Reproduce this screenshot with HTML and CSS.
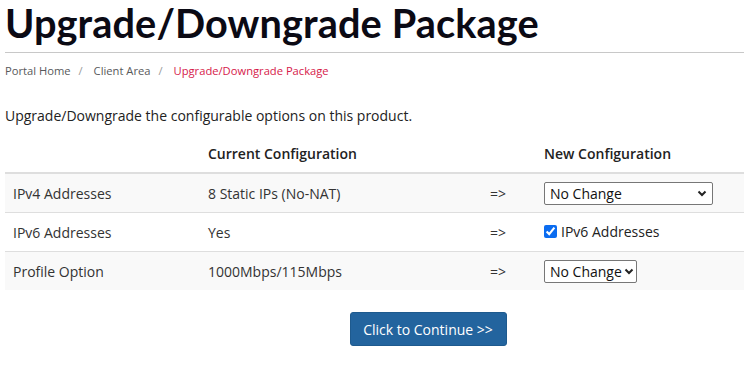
FILE: index.html
```html
<!DOCTYPE html>
<html>
<head>
<meta charset="utf-8">
<link rel="stylesheet" href="styles.css">
</head>
<body>
<div class="page">
  <h1 class="title">Upgrade/Downgrade Package</h1>
  <nav class="crumbs">
    <span class="crumb">Portal Home</span><span class="sep">/</span>
    <span class="crumb">Client Area</span><span class="sep">/</span>
    <span class="crumb active">Upgrade/Downgrade Package</span>
  </nav>
  <p class="intro">Upgrade/Downgrade the configurable options on this product.</p>
  <table class="config">
    <thead>
      <tr>
        <th class="c1"></th>
        <th class="c2">Current Configuration</th>
        <th class="c3"></th>
        <th class="c4">New Configuration</th>
      </tr>
    </thead>
    <tbody>
      <tr class="odd">
        <td>IPv4 Addresses</td>
        <td>8 Static IPs (No-NAT)</td>
        <td>=&gt;</td>
        <td>
          <span class="sel wide">
            <select><option>No Change</option></select>
            <svg class="chev" width="10" height="7" viewBox="0 0 10 7"><path d="M1.5 1.5 L5 5 L8.5 1.5" fill="none" stroke="#222" stroke-width="2"/></svg>
          </span>
        </td>
      </tr>
      <tr>
        <td>IPv6 Addresses</td>
        <td>Yes</td>
        <td>=&gt;</td>
        <td><label class="chk"><input type="checkbox" checked> IPv6 Addresses</label></td>
      </tr>
      <tr class="odd">
        <td>Profile Option</td>
        <td>1000Mbps/115Mbps</td>
        <td>=&gt;</td>
        <td>
          <span class="sel narrow">
            <select><option>No Change</option></select>
            <svg class="chev" width="10" height="7" viewBox="0 0 10 7"><path d="M1.5 1.5 L5 5 L8.5 1.5" fill="none" stroke="#222" stroke-width="2"/></svg>
          </span>
        </td>
      </tr>
    </tbody>
  </table>
  <div class="actions">
    <button class="btn">Click to Continue &gt;&gt;</button>
  </div>
</div>
</body>
</html>
```

FILE: styles.css
```css
html, body {
  margin: 0;
  padding: 0;
  background: #fff;
}
body {
  font-family: "Open Sans", "Liberation Sans", sans-serif;
  font-size: 14px;
  color: #333;
  overflow: hidden;
}
.page {
  padding: 0 0 0 5px;
}
.title {
  font-family: "Lato", "Liberation Sans", sans-serif;
  font-weight: 700;
  font-size: 39.7px;
  line-height: 46px;
  color: #0b0a14;
  margin: 0;
  padding: 0 0 6px 0;
  border-bottom: 1px solid #c8c8c8;
  letter-spacing: 0.1px;
}
.crumbs {
  font-size: 11.2px;
  line-height: 18px;
  margin-top: 9px;
  color: #58595b;
}
.sep {
  color: #9a9a9a;
  margin: 0 8px;
}
.crumb.active {
  color: #d6194a;
}
.intro {
  margin: 25px 0 0 0;
  line-height: 21px;
  color: #222;
}
.config {
  width: 100%;
  border-collapse: collapse;
  margin-top: 9px;
}
.config th {
  text-align: left;
  font-weight: 600;
  padding: 8px;
  line-height: 21px;
  height: 21px;
  color: #222;
  border-bottom: 2px solid #dedede;
}
.config td {
  padding: 0 8px;
  height: 38px;
  line-height: 21px;
  vertical-align: middle;
  border-top: 1px solid #dedede;
  color: #333;
}
.config thead + tbody tr:first-child td {
  border-top: none;
}
.config tr.odd td {
  background: #f9f9f9;
}
.c1 { width: 179px; }
.c2 { width: 266px; }
.c3 { width: 38px; }
.sel {
  position: relative;
  display: inline-block;
  vertical-align: middle;
}
.sel select {
  appearance: none;
  -webkit-appearance: none;
  font-family: "Open Sans", "Liberation Sans", sans-serif;
  font-size: 14px;
  color: #111;
  background: #fff;
  border: 1px solid #777;
  border-radius: 2px;
  height: 23px;
  padding: 0 20px 0 5px;
  margin: 0;
  display: block;
}
.sel.wide select { width: 169px; }
.sel.narrow select { width: 93px; padding-right: 14px; }
.chev {
  position: absolute;
  right: 6px;
  top: 8px;
  pointer-events: none;
}
.sel.narrow .chev { right: 3px; }
.chk {
  display: inline-flex;
  align-items: center;
  color: #222;
}
.chk input {
  width: 13px;
  height: 13px;
  margin: 0 4px 0 0;
  accent-color: #0b6cf0;
}
.actions {
  display: flex;
  justify-content: center;
  padding-left: 107px;
  margin-top: 22px;
}
.btn {
  font-family: "Open Sans", "Liberation Sans", sans-serif;
  font-size: 14px;
  color: #fff;
  background: #23649e;
  border: 1px solid #1e5a8e;
  border-radius: 3px;
  width: 157px;
  height: 34px;
  padding: 0;
  cursor: pointer;
}
```
